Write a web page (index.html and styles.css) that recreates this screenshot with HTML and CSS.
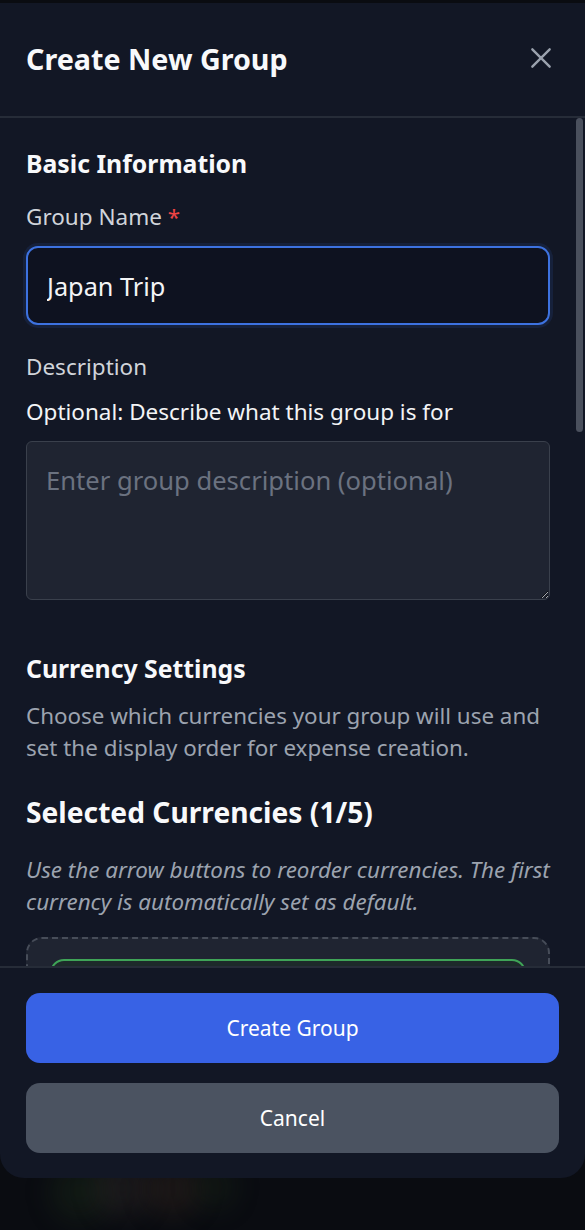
FILE: index.html
```html
<!DOCTYPE html>
<html lang="en">
<head>
<meta charset="utf-8">
<title>Create New Group</title>
<link rel="stylesheet" href="styles.css">
</head>
<body>
<div class="backdrop">
  <span class="blob blob-a"></span>
  <span class="blob blob-b"></span>
  <span class="blob blob-c"></span>
  <span class="blob blob-d"></span>
</div>
<div class="modal">
  <header class="modal-header">
    <h1 class="modal-title">Create New Group</h1>
    <button class="close-btn" aria-label="Close">
      <svg width="26" height="26" viewBox="0 0 24 24" fill="none" stroke="currentColor" stroke-width="2.2" stroke-linecap="round"><path d="M4 4 L20 20 M20 4 L4 20"/></svg>
    </button>
  </header>
  <div class="modal-body">
    <div class="scroll-content">
      <h2 class="section-title">Basic Information</h2>
      <label class="field-label" for="gname">Group Name <span class="req">*</span></label>
      <input id="gname" class="text-input" type="text" value="Japan Trip">

      <div class="field-label desc-label">Description</div>
      <div class="help">Optional: Describe what this group is for</div>
      <textarea class="text-area" placeholder="Enter group description (optional)"></textarea>

      <h2 class="section-title currency-title">Currency Settings</h2>
      <p class="muted">Choose which currencies your group will use and set the display order for expense creation.</p>

      <h3 class="sub-title">Selected Currencies (1/5)</h3>
      <p class="muted italic">Use the arrow buttons to reorder currencies. The first currency is automatically set as default.</p>

      <div class="dropzone">
        <div class="currency-item"></div>
      </div>
    </div>
    <div class="scroll-thumb"></div>
  </div>
  <footer class="modal-footer">
    <button class="btn btn-primary">Create Group</button>
    <button class="btn btn-secondary">Cancel</button>
  </footer>
</div>
</body>
</html>
```
FILE: styles.css
```css
* { box-sizing: border-box; }
html, body { margin: 0; padding: 0; }
body {
  width: 585px;
  height: 1230px;
  overflow: hidden;
  background: #0a0c11;
  font-family: "Noto Sans", "Open Sans", sans-serif;
  padding-top: 3px;
  position: relative;
}
.backdrop {
  position: absolute;
  left: 0; right: 0; bottom: 0;
  height: 80px;
  overflow: hidden;
}
.blob {
  position: absolute;
  border-radius: 50%;
  filter: blur(12px);
}
.blob-a { left: 50px; top: 12px; width: 60px; height: 60px; background: rgba(35,60,28,0.25); }
.blob-b { left: 95px; top: 8px; width: 55px; height: 60px; background: rgba(70,60,55,0.25); }
.blob-c { left: 145px; top: 12px; width: 55px; height: 55px; background: rgba(80,55,40,0.25); }
.blob-d { left: 195px; top: 14px; width: 40px; height: 45px; background: rgba(35,55,28,0.25); }

.modal {
  position: relative;
  width: 585px;
  height: 1175px;
  background: #121725;
  border-radius: 0 0 24px 24px;
  display: flex;
  flex-direction: column;
  overflow: hidden;
}
.modal-header {
  flex: 0 0 auto;
  height: 115px;
  display: flex;
  align-items: center;
  justify-content: space-between;
  padding: 0 31px 0 26px;
  border-bottom: 2px solid #262c38;
}
.modal-title {
  margin: 0;
  font-size: 28.7px;
  font-weight: 700;
  color: #f8f9fb;
  line-height: 36px;
  padding-bottom: 2px;
}
.close-btn {
  background: none;
  border: 0;
  padding: 0;
  color: #9aa1ad;
  display: flex;
  margin-bottom: 3px;
}
.modal-body {
  flex: 1 1 auto;
  position: relative;
  overflow: hidden;
}
.scroll-content {
  padding: 29px 35px 0 26px;
}
.scroll-thumb {
  position: absolute;
  right: 2px;
  top: 0;
  width: 7px;
  height: 314px;
  border-radius: 4px;
  background: #4a505d;
}
.section-title {
  margin: 0;
  font-size: 24.8px;
  line-height: 32px;
  font-weight: 700;
  color: #f8f9fb;
}
.field-label {
  display: block;
  margin-top: 23px;
  font-size: 22.5px;
  line-height: 30px;
  color: #d0d4da;
}
.req { color: #ef4444; }
.text-input {
  display: block;
  width: 100%;
  height: 79px;
  margin-top: 14px;
  padding: 0 19px;
  background: #0e1220;
  border: 2px solid #3d72e0;
  border-radius: 12px;
  box-shadow: 0 0 0 3px rgba(59,110,220,0.12);
  font-family: "Noto Sans", "Open Sans", sans-serif;
  font-size: 25.3px;
  color: #f3f4f6;
  outline: none;
}
.desc-label { margin-top: 27px; }
.help {
  margin-top: 15px;
  font-size: 22.5px;
  line-height: 30px;
  color: #f3f4f6;
}
.text-area {
  display: block;
  width: 100%;
  height: 159px;
  margin-top: 14px;
  padding: 24px 19px 20px;
  background: #1f2431;
  border: 1.5px solid #3a404c;
  border-radius: 6px;
  font-family: "Noto Sans", "Open Sans", sans-serif;
  font-size: 25.6px;
  line-height: 30px;
  color: #f3f4f6;
  outline: none;
}
.text-area::placeholder { color: #6b7280; }
.currency-title { margin-top: 52px; }
.muted {
  margin: 16px 0 0;
  font-size: 22.4px;
  line-height: 32px;
  color: #9ca3af;
}
.sub-title {
  margin: 30px 0 0;
  font-size: 28.2px;
  line-height: 36px;
  font-weight: 700;
  color: #f8f9fb;
}
.italic { font-style: italic; margin-top: 24px; }
.dropzone {
  margin-top: 19px;
  padding: 20px 22px;
  background: #1f2431;
  border: 2px dashed #474d59;
  border-radius: 16px;
}
.currency-item {
  height: 80px;
  border: 2px solid #3fa457;
  border-radius: 14px;
  background: #1d2a2a;
}
.modal-footer {
  flex: 0 0 auto;
  border-top: 2px solid #262c38;
  padding: 25px 26px 25px;
  display: flex;
  flex-direction: column;
  gap: 20px;
}
.btn {
  height: 70px;
  border: 0;
  border-radius: 14px;
  font-family: "Noto Sans", "Open Sans", sans-serif;
  font-size: 21px;
  font-weight: 400;
  color: #ffffff;
}
.btn-primary { background: #3862e5; }
.btn-secondary { background: #4b5361; }
```
